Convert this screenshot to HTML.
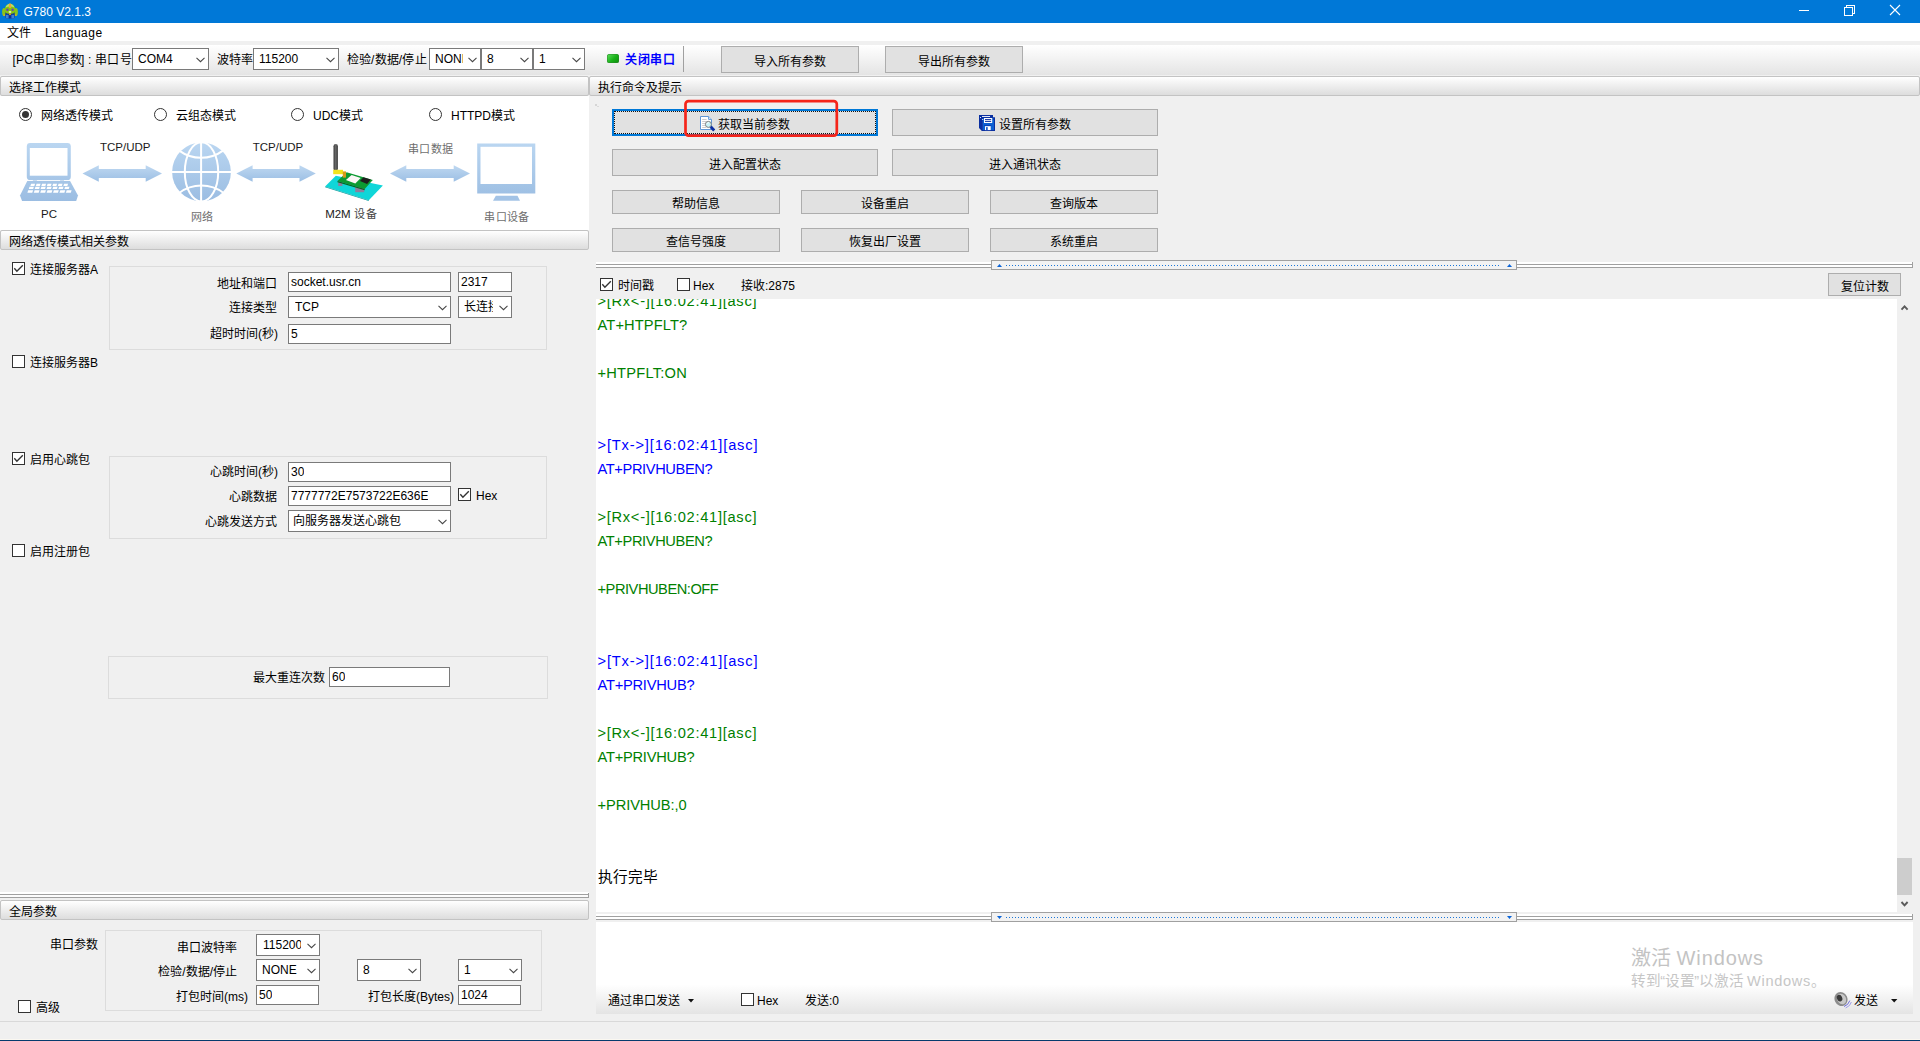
<!DOCTYPE html>
<html lang="zh-CN"><head><meta charset="utf-8"><title>G780 V2.1.3</title>
<style>
html,body{margin:0;padding:0}
body{width:1920px;height:1041px;overflow:hidden;background:#f0f0f0;position:relative;
 font-family:"Liberation Sans",sans-serif;font-size:12px;color:#000}
.a{position:absolute;box-sizing:content-box}
.t{position:absolute;white-space:nowrap;line-height:14px;font-size:12px}
.hdr{height:18px;border:1px solid #c3c3c3;border-radius:2px;
 background:linear-gradient(#ffffff,#f3f3f3 35%,#dddddd);}
.hdr>span{position:absolute;left:8px;top:4px;line-height:14px;white-space:nowrap}
.sel,.inp{background:#fff;border:1px solid #7a7a7a;overflow:hidden}
.sv{position:absolute;top:0;white-space:nowrap;overflow:hidden;display:block}
.inp .sv{top:0}
.chev{position:absolute;right:3.5px;top:50%;margin-top:-2px}
.cb{width:11px;height:11px;border:1px solid #333;background:#fff}
.rd{width:11px;height:11px;border:1px solid #333;border-radius:50%;background:#fff}
.rd i{position:absolute;left:2px;top:2px;width:7px;height:7px;border-radius:50%;background:#333}
.btn{background:#e1e1e1;border:1px solid #adadad;text-align:center;white-space:nowrap}
.btn>span{display:inline-block;vertical-align:top;position:relative}
.grp{border:1px solid #dcdcdc}
.log{position:absolute;white-space:pre;font-size:14.67px;line-height:24px}
.cj{display:inline-block;text-align:justify;text-align-last:justify;white-space:nowrap;vertical-align:baseline;
 text-shadow:1px 0 0 currentColor,0 -1px 0 currentColor,1px -1px 0 currentColor}
.cjkfont .cj{text-shadow:none}
.g{color:#008000}.b{color:#0000ff}
</style></head>
<body>
<div class="a " style="left:0px;top:0px;width:1920px;height:23px;background:#0078d7"></div>
<svg class="a" style="left:2px;top:3px" width="16" height="16" viewBox="0 0 16 16">
<ellipse cx="2" cy="9" rx="1.9" ry="4" fill="#8ac41c"/><ellipse cx="14" cy="9" rx="1.9" ry="4" fill="#8ac41c"/>
<circle cx="2.2" cy="12.2" r="0.9" fill="#d8b020"/><circle cx="13.8" cy="12.2" r="0.9" fill="#d8b020"/>
<path d="M3.4 9 H12.6 V14.6 Q12.6 15.4 11.8 15.4 H4.2 Q3.4 15.4 3.4 14.6Z" fill="#0c2f96"/>
<rect x="3.8" y="11.8" width="2.8" height="3.6" fill="#3f82d2"/><rect x="9.4" y="11.8" width="2.8" height="3.6" fill="#3f82d2"/>
<path d="M8 0.4 C12.8 1.2 14 6 13.2 8.8 C12.4 10.6 10.2 11 8 11 C5.8 11 3.6 10.6 2.8 8.8 C2 6 3.2 1.2 8 0.4Z" fill="#84c212"/>
<path d="M8 0.6 C10.8 1.4 12 3 12.4 4.6 C10 3.2 6 3.2 3.6 4.6 C4 3 5.2 1.4 8 0.6Z" fill="#b6df70"/>
<rect x="6.9" y="0.8" width="2.2" height="4.2" rx="0.9" fill="#f2a336"/>
<circle cx="5.4" cy="6.7" r="1.2" fill="#6b3db4"/><circle cx="10.6" cy="6.7" r="1.2" fill="#6b3db4"/>
<ellipse cx="8" cy="9" rx="1.4" ry="0.7" fill="#fff"/>
<rect x="7.1" y="10.4" width="1.8" height="1.7" fill="#e8a422"/>
</svg>
<div class="t" style="left:23.5px;top:1px;line-height:23px;color:#fff;font-size:12px;letter-spacing:0">G780 V2.1.3</div>
<svg class="a" style="left:1790px;top:0" width="130" height="23" viewBox="1790 0 130 23" shape-rendering="crispEdges">
<rect x="1799" y="10" width="10" height="1" fill="#fff"/>
<path d="M1846.5 7.5 V5.5 H1854.5 V13.5 H1852.5" fill="none" stroke="#fff" stroke-width="1"/>
<rect x="1844.5" y="7.5" width="8" height="8" fill="none" stroke="#fff" stroke-width="1"/>
</svg>
<svg class="a" style="left:1888px;top:3px" width="14" height="14" viewBox="0 0 14 14">
<path d="M2 2 L12 12 M12 2 L2 12" stroke="#fff" stroke-width="1.1" fill="none"/></svg>
<div class="a " style="left:0px;top:23px;width:1920px;height:18px;background:#fff"></div>
<div class="t " style="left:7px;top:26px;"><span class="cj" style="width:24px">文件</span></div>
<div class="t " style="left:45px;top:26px;letter-spacing:0.55px">Language</div>
<div class="a " style="left:0px;top:45px;width:1920px;height:30px;background:linear-gradient(#ffffff,#f3f3f3 45%,#e4e4e4)"></div>
<div class="t " style="left:12.4px;top:53px;letter-spacing:0.2px">[PC<span class="cj" style="width:48px">串口参数</span>] : <span class="cj" style="width:36px">串口号</span></div>
<div class="a sel" style="left:132px;top:48px;width:75px;height:20px"><span class="sv" style="left:5px;width:55px;line-height:20px">COM4</span><svg class="chev" width="9" height="6" viewBox="0 0 9 6"><path d="M0.5 0.9 L4.5 4.7 L8.5 0.9" fill="none" stroke="#454545" stroke-width="1.05"/></svg></div>
<div class="t " style="left:217px;top:53px;"><span class="cj" style="width:36px">波特率</span></div>
<div class="a sel" style="left:253px;top:48px;width:84px;height:20px"><span class="sv" style="left:5px;width:64px;line-height:20px">115200</span><svg class="chev" width="9" height="6" viewBox="0 0 9 6"><path d="M0.5 0.9 L4.5 4.7 L8.5 0.9" fill="none" stroke="#454545" stroke-width="1.05"/></svg></div>
<div class="t " style="left:347px;top:53px;letter-spacing:0.4px"><span class="cj" style="width:24px">检验</span>/<span class="cj" style="width:24px">数据</span>/<span class="cj" style="width:24px">停止</span></div>
<div class="a sel" style="left:429px;top:48px;width:50px;height:20px"><span class="sv" style="left:5px;width:28px;line-height:20px">NONE</span><svg class="chev" width="9" height="6" viewBox="0 0 9 6"><path d="M0.5 0.9 L4.5 4.7 L8.5 0.9" fill="none" stroke="#454545" stroke-width="1.05"/></svg></div>
<div class="a sel" style="left:481px;top:48px;width:50px;height:20px"><span class="sv" style="left:5px;width:30px;line-height:20px">8</span><svg class="chev" width="9" height="6" viewBox="0 0 9 6"><path d="M0.5 0.9 L4.5 4.7 L8.5 0.9" fill="none" stroke="#454545" stroke-width="1.05"/></svg></div>
<div class="a sel" style="left:533px;top:48px;width:50px;height:20px"><span class="sv" style="left:5px;width:30px;line-height:20px">1</span><svg class="chev" width="9" height="6" viewBox="0 0 9 6"><path d="M0.5 0.9 L4.5 4.7 L8.5 0.9" fill="none" stroke="#454545" stroke-width="1.05"/></svg></div>
<div class="a " style="left:607px;top:54px;width:12px;height:9px;border-radius:2.5px;background:linear-gradient(135deg,#5fe05f,#18b018 55%,#0c8c0c);box-shadow:0 0 0 0.5px #2a8a2a inset"></div>
<div class="t " style="left:625px;top:53px;color:#0000ff;font-weight:bold"><span class="cj" style="width:50px">关闭串口</span></div>
<div class="a " style="left:683px;top:46px;width:1px;height:26px;background:#a0a0a0"></div>
<div class="a btn " style="left:721px;top:46px;width:136px;height:25px;line-height:25px"><span style="top:3px"><span class="cj" style="width:72px">导入所有参数</span></span></div>
<div class="a btn " style="left:885px;top:46px;width:136px;height:25px;line-height:25px"><span style="top:3px"><span class="cj" style="width:72px">导出所有参数</span></span></div>
<div class="a hdr" style="left:0px;top:76px;width:587px"><span><span class="cj" style="width:72px">选择工作模式</span></span></div>
<div class="a " style="left:0px;top:96px;width:589px;height:134px;background:#fff"></div>
<div class="a rd" style="left:19px;top:108px"><i></i></div>
<div class="t " style="left:41px;top:109px;"><span class="cj" style="width:72px">网络透传模式</span></div>
<div class="a rd" style="left:154px;top:108px"></div>
<div class="t " style="left:176px;top:109px;"><span class="cj" style="width:60px">云组态模式</span></div>
<div class="a rd" style="left:291px;top:108px"></div>
<div class="t " style="left:313px;top:109px;">UDC<span class="cj" style="width:24px">模式</span></div>
<div class="a rd" style="left:429px;top:108px"></div>
<div class="t " style="left:451px;top:109px;">HTTPD<span class="cj" style="width:24px">模式</span></div>
<svg class="a" style="left:0;top:96px" width="589" height="134" viewBox="0 96 589 134">
<defs>
<linearGradient id="ga" x1="0" y1="0" x2="0" y2="1"><stop offset="0" stop-color="#bfd8f1"/><stop offset="1" stop-color="#9cbfe4"/></linearGradient>
<linearGradient id="gl" gradientUnits="userSpaceOnUse" x1="0" y1="143" x2="0" y2="201"><stop offset="0" stop-color="#bad6f1"/><stop offset="1" stop-color="#9bbde2"/></linearGradient>
<linearGradient id="gant" x1="0" y1="0" x2="1" y2="0"><stop offset="0" stop-color="#3a3a3a"/><stop offset="0.5" stop-color="#6a6a6a"/><stop offset="1" stop-color="#363636"/></linearGradient>
</defs>
<rect x="26.8" y="143" width="44" height="37.2" rx="3.4" fill="url(#gl)"/>
<rect x="29.8" y="148" width="37.7" height="27.7" fill="#fff"/>
<polygon points="27.5,180.6 69.8,180.6 78,195.5 76.2,200.9 22.1,200.9 20,195.5" fill="url(#gl)"/>
<rect x="26.8" y="180.1" width="6.1" height="0.9" fill="#fff"/><rect x="64" y="180.1" width="6.8" height="0.9" fill="#fff"/>
<rect x="36.9" y="180" width="23.2" height="0.8" fill="#fff"/>
<g stroke="#fff" transform="skewX(-18)">
<line x1="90.8" y1="184.9" x2="127.9" y2="184.9" stroke-width="2.3" stroke-dasharray="4 1.5"/>
<line x1="90.2" y1="187.95" x2="130.3" y2="187.95" stroke-width="2.3" stroke-dasharray="4.4 1.53"/>
<line x1="90" y1="191.45" x2="133.4" y2="191.45" stroke-width="2.6" stroke-dasharray="4.9 1.52"/>
</g>
<polygon fill="url(#ga)" points="82.5,173.5 98.8,165.3 98.8,169.1 145.7,169.1 145.7,165.3 162,173.5 145.7,181.7 145.7,177.9 98.8,177.9 98.8,181.7"/>
<circle cx="201.5" cy="171.9" r="29.4" fill="url(#gl)"/>
<g fill="none" stroke="#fff" stroke-width="2">
<line x1="171" y1="172" x2="232" y2="172"/><line x1="201.1" y1="142" x2="201.1" y2="202"/>
<ellipse cx="201.5" cy="171.9" rx="16.7" ry="29.6"/>
<path d="M179.2 150.6 A37 37 0 0 0 223 150.6"/><path d="M179.2 193 A37 37 0 0 1 223.6 193"/>
</g>
<polygon fill="url(#ga)" points="236.3,173.5 252.6,165.3 252.6,169.1 299.5,169.1 299.5,165.3 315.8,173.5 299.5,181.7 299.5,177.9 252.6,177.9 252.6,181.7"/>
<polygon points="325.1,186.4 335.8,175.7 382.9,185.4 368.8,200.2" fill="#0fd6d8"/>
<polygon points="325.1,186.4 368.8,200.2 368.8,201 325.1,187.2" fill="#0a9ea0"/>
<rect x="338.2" y="182.2" width="4.2" height="3.8" fill="#8c7f9e"/>
<rect x="355.2" y="187" width="9" height="5.2" fill="#8c7f9e"/>
<polygon points="337.5,181 346.6,172.3 372.8,180 364.7,189.1" fill="#0c9a32"/>
<polygon points="337.5,181 364.7,189.1 364.7,190.3 337.5,182.2" fill="#08661f"/>
<polygon points="345.9,180 351.6,175 360.7,178 355.3,183.4" fill="#fbf6f6"/>
<polygon points="360,181 363.4,177.3 370.8,179.4 367.1,184" fill="#1e1e1e"/>
<rect x="333.5" y="144" width="4.4" height="27" rx="2.2" fill="url(#gant)"/>
<rect x="333.2" y="169.8" width="9.8" height="4.4" fill="#f2e41c"/>
<rect x="342.8" y="171.4" width="3.2" height="6.2" fill="#d89a1c"/>
<polygon fill="url(#ga)" points="390,173.5 406.3,165.3 406.3,169.1 453.7,169.1 453.7,165.3 470,173.5 453.7,181.7 453.7,177.9 406.3,177.9 406.3,181.7"/>
<rect x="477.2" y="143.5" width="58.1" height="50" fill="url(#gl)"/>
<rect x="480.5" y="146.8" width="51.5" height="37.2" fill="#fff"/>
<polygon points="495.8,195.7 517.5,195.7 520,200.7 493,200.7" fill="#a3c3e6"/>
</svg>
<div class="t " style="left:-74.8px;width:400px;text-align:center;top:140px;font-size:11.5px;color:#1a1a1a">TCP/UDP</div>
<div class="t " style="left:78px;width:400px;text-align:center;top:140px;font-size:11.5px;color:#1a1a1a">TCP/UDP</div>
<div class="t " style="left:230.6px;width:400px;text-align:center;top:142px;font-size:11px;color:#6e6e6e"><span class="cj" style="width:45.2px">串口数据</span></div>
<div class="t " style="left:-151px;width:400px;text-align:center;top:207px;font-size:11.5px;color:#1a1a1a">PC</div>
<div class="t " style="left:1.5px;width:400px;text-align:center;top:210px;font-size:11px;color:#6e6e6e"><span class="cj" style="width:22px">网络</span></div>
<div class="t" style="left:151px;width:400px;text-align:center;top:207px;font-size:11.5px;color:#1a1a1a">M2M <span style="font-size:11px;color:#6e6e6e;color:#444"><span class="cj" style="width:23px">设备</span></span></div>
<div class="t " style="left:306.8px;width:400px;text-align:center;top:210px;font-size:11px;color:#6e6e6e"><span class="cj" style="width:45.2px">串口设备</span></div>
<div class="a hdr" style="left:0px;top:230px;width:587px"><span><span class="cj" style="width:120px">网络透传模式相关参数</span></span></div>
<div class="a cb" style="left:12px;top:262px"><svg width="11" height="11" viewBox="0 0 11 11" style="position:absolute;left:0;top:0"><path d="M1.3 5.3 L3.9 8.3 L9.8 2.2" fill="none" stroke="#333" stroke-width="1.35"/></svg></div>
<div class="t " style="left:30px;top:263px;"><span class="cj" style="width:60px">连接服务器</span>A</div>
<div class="a grp" style="left:109px;top:266px;width:436px;height:82px"></div>
<div class="t " style="left:-23px;width:300px;text-align:right;top:277px;"><span class="cj" style="width:60px">地址和端口</span></div>
<div class="a inp" style="left:288px;top:272px;width:161px;height:18px"><span class="sv" style="left:2px;line-height:19px">socket.usr.cn</span></div>
<div class="a inp" style="left:458px;top:272px;width:52px;height:18px"><span class="sv" style="left:2px;line-height:19px">2317</span></div>
<div class="t " style="left:-23px;width:300px;text-align:right;top:301px;"><span class="cj" style="width:48px">连接类型</span></div>
<div class="a sel" style="left:288px;top:296px;width:161px;height:20px"><span class="sv" style="left:6px;width:141px;line-height:20px">TCP</span><svg class="chev" width="9" height="6" viewBox="0 0 9 6"><path d="M0.5 0.9 L4.5 4.7 L8.5 0.9" fill="none" stroke="#454545" stroke-width="1.05"/></svg></div>
<div class="a sel" style="left:458px;top:296px;width:52px;height:20px"><span class="sv" style="left:5px;width:29px;line-height:20px"><span class="cj" style="width:36px">长连接</span></span><svg class="chev" width="9" height="6" viewBox="0 0 9 6"><path d="M0.5 0.9 L4.5 4.7 L8.5 0.9" fill="none" stroke="#454545" stroke-width="1.05"/></svg></div>
<div class="t " style="left:-22px;width:300px;text-align:right;top:327px;"><span class="cj" style="width:48px">超时时间</span>(<span class="cj" style="width:12px">秒</span>)</div>
<div class="a inp" style="left:288px;top:324px;width:161px;height:18px"><span class="sv" style="left:2px;line-height:19px">5</span></div>
<div class="a cb" style="left:12px;top:355px"></div>
<div class="t " style="left:30px;top:356px;"><span class="cj" style="width:60px">连接服务器</span>B</div>
<div class="a cb" style="left:12px;top:452px"><svg width="11" height="11" viewBox="0 0 11 11" style="position:absolute;left:0;top:0"><path d="M1.3 5.3 L3.9 8.3 L9.8 2.2" fill="none" stroke="#333" stroke-width="1.35"/></svg></div>
<div class="t " style="left:30px;top:453px;"><span class="cj" style="width:60px">启用心跳包</span></div>
<div class="a grp" style="left:109px;top:456px;width:436px;height:81px"></div>
<div class="t " style="left:-22px;width:300px;text-align:right;top:465px;"><span class="cj" style="width:48px">心跳时间</span>(<span class="cj" style="width:12px">秒</span>)</div>
<div class="a inp" style="left:288px;top:462px;width:161px;height:18px"><span class="sv" style="left:2px;line-height:19px">30</span></div>
<div class="t " style="left:-23px;width:300px;text-align:right;top:490px;"><span class="cj" style="width:48px">心跳数据</span></div>
<div class="a inp" style="left:288px;top:486px;width:161px;height:18px"><span class="sv" style="left:2px;line-height:19px">7777772E7573722E636E</span></div>
<div class="a cb" style="left:458px;top:488px"><svg width="11" height="11" viewBox="0 0 11 11" style="position:absolute;left:0;top:0"><path d="M1.3 5.3 L3.9 8.3 L9.8 2.2" fill="none" stroke="#333" stroke-width="1.35"/></svg></div>
<div class="t " style="left:476px;top:489px;">Hex</div>
<div class="t " style="left:-23px;width:300px;text-align:right;top:515px;"><span class="cj" style="width:72px">心跳发送方式</span></div>
<div class="a sel" style="left:288px;top:510px;width:161px;height:20px"><span class="sv" style="left:4px;width:141px;line-height:20px"><span class="cj" style="width:108px">向服务器发送心跳包</span></span><svg class="chev" width="9" height="6" viewBox="0 0 9 6"><path d="M0.5 0.9 L4.5 4.7 L8.5 0.9" fill="none" stroke="#454545" stroke-width="1.05"/></svg></div>
<div class="a cb" style="left:12px;top:544px"></div>
<div class="t " style="left:30px;top:545px;"><span class="cj" style="width:60px">启用注册包</span></div>
<div class="a grp" style="left:108px;top:656px;width:438px;height:41px"></div>
<div class="t " style="left:25px;width:300px;text-align:right;top:671px;"><span class="cj" style="width:72px">最大重连次数</span></div>
<div class="a inp" style="left:329px;top:667px;width:119px;height:18px"><span class="sv" style="left:2px;line-height:19px">60</span></div>
<div class="a " style="left:0px;top:892px;width:589px;height:2px;background:#fff"></div>
<div class="a " style="left:0px;top:894px;width:589px;height:1px;background:#a0a0a0"></div>
<div class="a " style="left:0px;top:895px;width:589px;height:2px;background:#fcfcfc"></div>
<div class="a " style="left:0px;top:897px;width:589px;height:1px;background:#a0a0a0"></div>
<div class="a " style="left:588px;top:893px;width:1px;height:5px;background:#a0a0a0"></div>
<div class="a hdr" style="left:0px;top:900px;width:587px"><span><span class="cj" style="width:48px">全局参数</span></span></div>
<div class="t " style="left:-202px;width:300px;text-align:right;top:938px;"><span class="cj" style="width:48px">串口参数</span></div>
<div class="a grp" style="left:105px;top:930px;width:435px;height:79px"></div>
<div class="t " style="left:-63px;width:300px;text-align:right;top:941px;"><span class="cj" style="width:60px">串口波特率</span></div>
<div class="a sel" style="left:256px;top:934px;width:62px;height:20px"><span class="sv" style="left:6px;width:38px;line-height:20px">115200</span><svg class="chev" width="9" height="6" viewBox="0 0 9 6"><path d="M0.5 0.9 L4.5 4.7 L8.5 0.9" fill="none" stroke="#454545" stroke-width="1.05"/></svg></div>
<div class="t " style="left:-63px;width:300px;text-align:right;top:965px;"><span class="cj" style="width:24px">检验</span>/<span class="cj" style="width:24px">数据</span>/<span class="cj" style="width:24px">停止</span></div>
<div class="a sel" style="left:256px;top:959px;width:62px;height:20px"><span class="sv" style="left:5px;width:42px;line-height:20px">NONE</span><svg class="chev" width="9" height="6" viewBox="0 0 9 6"><path d="M0.5 0.9 L4.5 4.7 L8.5 0.9" fill="none" stroke="#454545" stroke-width="1.05"/></svg></div>
<div class="a sel" style="left:357px;top:959px;width:62px;height:20px"><span class="sv" style="left:5px;width:42px;line-height:20px">8</span><svg class="chev" width="9" height="6" viewBox="0 0 9 6"><path d="M0.5 0.9 L4.5 4.7 L8.5 0.9" fill="none" stroke="#454545" stroke-width="1.05"/></svg></div>
<div class="a sel" style="left:458px;top:959px;width:62px;height:20px"><span class="sv" style="left:5px;width:42px;line-height:20px">1</span><svg class="chev" width="9" height="6" viewBox="0 0 9 6"><path d="M0.5 0.9 L4.5 4.7 L8.5 0.9" fill="none" stroke="#454545" stroke-width="1.05"/></svg></div>
<div class="t " style="left:-52px;width:300px;text-align:right;top:990px;"><span class="cj" style="width:48px">打包时间</span>(ms)</div>
<div class="a inp" style="left:256px;top:985px;width:61px;height:18px"><span class="sv" style="left:2px;line-height:19px">50</span></div>
<div class="t " style="left:154px;width:300px;text-align:right;top:990px;"><span class="cj" style="width:48px">打包长度</span>(Bytes)</div>
<div class="a inp" style="left:458px;top:985px;width:61px;height:18px"><span class="sv" style="left:2px;line-height:19px">1024</span></div>
<div class="a cb" style="left:18px;top:1000px"></div>
<div class="t " style="left:36px;top:1001px;"><span class="cj" style="width:24px">高级</span></div>
<div class="a hdr" style="left:589px;top:76px;width:1329px"><span><span class="cj" style="width:84px">执行命令及提示</span></span></div>
<div class="a " style="left:595px;top:104px;width:2px;height:2px;background:#cdcdcd;border-radius:1px"></div>
<div class="a " style="left:596.5px;top:105.5px;width:2px;height:1.5px;background:#d6d6d6;border-radius:1px"></div>
<div class="a" style="left:612px;top:109px;width:262px;height:23px;border:2px solid #0078d7;background:#e1e1e1"></div>
<div class="a" style="left:614px;top:111px;width:260px;height:21px;border:1px dotted #111"></div>
<div class="t" style="left:700px;top:116px;line-height:16px"><svg width="16" height="16" viewBox="0 0 16 16" style="display:inline-block;vertical-align:top;position:relative;top:0px;margin-right:2px">
<path d="M0.5 0.5 H8.6 L11.5 3.4 V13.5 H0.5 Z" fill="#ffffff" stroke="#5f97d6" stroke-width="1"/>
<path d="M8.6 0.5 V3.4 H11.5" fill="#eaf2fc" stroke="#5f97d6" stroke-width="1"/>
<path d="M2.2 3.5H6.6 M2.2 5.5H6.6 M2.2 7.5H5 M2.2 9.5H5 M2.2 11.5H6" stroke="#cdcdcd" stroke-width="1"/>
<circle cx="8.4" cy="8.4" r="3" fill="#c9f3f8" stroke="#7c7c7c" stroke-width="1"/>
<path d="M6.9 7.9 Q7.4 6.6 8.8 6.5" fill="none" stroke="#ffffff" stroke-width="0.9"/>
<path d="M10.7 10.7 L14.2 14.4" stroke="#0b2ea2" stroke-width="2.9" stroke-linecap="butt"/>
</svg><span style="position:relative;top:1px"><span class="cj" style="width:72px">获取当前参数</span></span></div>
<svg class="a" style="left:680px;top:96px" width="164" height="46" viewBox="680 96 164 46"><rect x="685.5" y="101.1" width="151.3" height="34.5" rx="3" fill="none" stroke="#f5251a" stroke-width="2.7"/></svg>
<div class="a btn " style="left:892px;top:109px;width:264px;height:25px;line-height:25px"><svg width="16" height="16" viewBox="0 0 16 16" style="display:inline-block;vertical-align:top;position:relative;top:5px;margin-right:4px">
<polygon points="0,0 14,0 14,3 3,3 3,16 0,13" fill="#0a2fa0"/>
<rect x="3" y="1.1" width="8" height="0.9" fill="#fff"/><rect x="1" y="2" width="1" height="1" fill="#dfe6f8"/>
<rect x="3.3" y="2.8" width="12.2" height="12.7" fill="#0b60d3" stroke="#0a2fa0" stroke-width="1"/>
<rect x="5" y="3" width="8.2" height="5" fill="#fff"/>
<path d="M6 4.6H12.2 M6 6.4H12.2" stroke="#0a2fa0" stroke-width="1"/>
<rect x="5.2" y="10" width="7" height="1" fill="#0a3fb4"/>
<rect x="6" y="11.2" width="5.7" height="3.9" fill="#fff"/>
<rect x="7.1" y="12.1" width="1.6" height="3" fill="#0b50c8"/>
<rect x="3.2" y="4" width="1" height="1" fill="#e8eefc"/><rect x="14" y="3.6" width="1" height="1" fill="#0a2fa0"/>
</svg><span style="top:3px"><span class="cj" style="width:72px">设置所有参数</span></span></div>
<div class="a btn " style="left:612px;top:149px;width:264px;height:25px;line-height:25px"><span style="top:3px"><span class="cj" style="width:72px">进入配置状态</span></span></div>
<div class="a btn " style="left:892px;top:149px;width:264px;height:25px;line-height:25px"><span style="top:3px"><span class="cj" style="width:72px">进入通讯状态</span></span></div>
<div class="a btn " style="left:612px;top:190px;width:166px;height:22px;line-height:22px"><span style="top:2px"><span class="cj" style="width:48px">帮助信息</span></span></div>
<div class="a btn " style="left:612px;top:228px;width:166px;height:22px;line-height:22px"><span style="top:2px"><span class="cj" style="width:60px">查信号强度</span></span></div>
<div class="a btn " style="left:801px;top:190px;width:166px;height:22px;line-height:22px"><span style="top:2px"><span class="cj" style="width:48px">设备重启</span></span></div>
<div class="a btn " style="left:801px;top:228px;width:166px;height:22px;line-height:22px"><span style="top:2px"><span class="cj" style="width:72px">恢复出厂设置</span></span></div>
<div class="a btn " style="left:990px;top:190px;width:166px;height:22px;line-height:22px"><span style="top:2px"><span class="cj" style="width:48px">查询版本</span></span></div>
<div class="a btn " style="left:990px;top:228px;width:166px;height:22px;line-height:22px"><span style="top:2px"><span class="cj" style="width:48px">系统重启</span></span></div>
<div class="a " style="left:596px;top:262px;width:1317px;height:2px;background:#fff"></div>
<div class="a " style="left:596px;top:264px;width:1317px;height:1px;background:#a0a0a0"></div>
<div class="a " style="left:596px;top:265px;width:1317px;height:2px;background:#fff"></div>
<div class="a " style="left:596px;top:267px;width:1317px;height:1px;background:#a0a0a0"></div>
<div class="a " style="left:1912px;top:262px;width:1px;height:6px;background:#a0a0a0"></div>
<div class="a " style="left:991px;top:260px;width:524px;height:8px;border:1px solid #a0a0a0;background:#f2f2f2"></div>
<svg class="a" style="left:991px;top:260px" width="526" height="10" viewBox="0 0 526 10"><path d="M0 3 L2.5 0 L5 3Z" transform="translate(6,4)" fill="#0a64d8"/><path d="M0 3 L2.5 0 L5 3Z" transform="translate(516,4)" fill="#0a64d8"/><line x1="15" y1="5.5" x2="509" y2="5.5" stroke="#1a76d8" stroke-width="1" stroke-dasharray="1 2" shape-rendering="crispEdges"/></svg>
<div class="a cb" style="left:600px;top:278px"><svg width="11" height="11" viewBox="0 0 11 11" style="position:absolute;left:0;top:0"><path d="M1.3 5.3 L3.9 8.3 L9.8 2.2" fill="none" stroke="#333" stroke-width="1.35"/></svg></div>
<div class="t " style="left:618px;top:279px;"><span class="cj" style="width:36px">时间戳</span></div>
<div class="a cb" style="left:677px;top:278px"></div>
<div class="t " style="left:693px;top:279px;">Hex</div>
<div class="t " style="left:741px;top:279px;"><span class="cj" style="width:24px">接收</span>:2875</div>
<div class="a btn " style="left:1828px;top:273px;width:71px;height:21px;line-height:21px"><span style="top:3px"><span class="cj" style="width:48px">复位计数</span></span></div>
<div class="a " style="left:596px;top:299px;width:1301px;height:613px;background:#fff;overflow:hidden"><div class="log" style="left:1.5px;top:-10px"><div class="g"><span style="letter-spacing:0.705px">&gt;[Rx&lt;-][16:02:41][asc]</span></div><div class="g"><span style="letter-spacing:0.118px">AT+HTPFLT?</span></div><div>&nbsp;</div><div class="g"><span style="letter-spacing:0.224px">+HTPFLT:ON</span></div><div>&nbsp;</div><div>&nbsp;</div><div class="b"><span style="letter-spacing:0.83px">&gt;[Tx-&gt;][16:02:41][asc]</span></div><div class="b"><span style="letter-spacing:-0.39px">AT+PRIVHUBEN?</span></div><div>&nbsp;</div><div class="g"><span style="letter-spacing:0.705px">&gt;[Rx&lt;-][16:02:41][asc]</span></div><div class="g"><span style="letter-spacing:-0.39px">AT+PRIVHUBEN?</span></div><div>&nbsp;</div><div class="g"><span style="letter-spacing:-0.473px">+PRIVHUBEN:OFF</span></div><div>&nbsp;</div><div>&nbsp;</div><div class="b"><span style="letter-spacing:0.83px">&gt;[Tx-&gt;][16:02:41][asc]</span></div><div class="b"><span style="letter-spacing:-0.242px">AT+PRIVHUB?</span></div><div>&nbsp;</div><div class="g"><span style="letter-spacing:0.705px">&gt;[Rx&lt;-][16:02:41][asc]</span></div><div class="g"><span style="letter-spacing:-0.242px">AT+PRIVHUB?</span></div><div>&nbsp;</div><div class="g"><span style="letter-spacing:-0.082px">+PRIVHUB:,0</span></div><div>&nbsp;</div><div>&nbsp;</div><div class="k"><span class="cj" style="width:58.68px">执行完毕</span></div></div></div>
<svg class="a" style="left:1897px;top:299px" width="17" height="613" viewBox="0 0 17 613">
<path d="M4.5 10.6 L7.55 7.3 L10.6 10.6" fill="none" stroke="#5a5a5a" stroke-width="1.9"/>
<rect x="0" y="559" width="15" height="37" fill="#cdcdcd"/>
<path d="M4.5 603 L7.55 606.3 L10.6 603" fill="none" stroke="#5a5a5a" stroke-width="1.9"/></svg>
<div class="a " style="left:596px;top:914px;width:1317px;height:2px;background:#fff"></div>
<div class="a " style="left:596px;top:916px;width:1317px;height:1px;background:#a0a0a0"></div>
<div class="a " style="left:596px;top:917px;width:1317px;height:2px;background:#fff"></div>
<div class="a " style="left:596px;top:919px;width:1317px;height:1px;background:#a0a0a0"></div>
<div class="a " style="left:1912px;top:914px;width:1px;height:6px;background:#a0a0a0"></div>
<div class="a " style="left:991px;top:912px;width:524px;height:8px;border:1px solid #a0a0a0;background:#f2f2f2"></div>
<svg class="a" style="left:991px;top:912px" width="526" height="10" viewBox="0 0 526 10"><path d="M0 0 L5 0 L2.5 3Z" transform="translate(6,4)" fill="#0a64d8"/><path d="M0 0 L5 0 L2.5 3Z" transform="translate(516,4)" fill="#0a64d8"/><line x1="15" y1="5.5" x2="509" y2="5.5" stroke="#1a76d8" stroke-width="1" stroke-dasharray="1 2" shape-rendering="crispEdges"/></svg>
<div class="a " style="left:596px;top:922px;width:1317px;height:92px;background:linear-gradient(#ffffff 0,#ffffff 68%,#e4e4e4 100%)"></div>
<div class="t " style="left:608px;top:994px;"><span class="cj" style="width:72px">通过串口发送</span></div>
<svg class="a" style="left:688px;top:999px" width="6" height="4"><path d="M0 0H6L3 3.5Z" fill="#111"/></svg>
<div class="a cb" style="left:741px;top:993px"></div>
<div class="t " style="left:757px;top:994px;">Hex</div>
<div class="t " style="left:805px;top:994px;"><span class="cj" style="width:24px">发送</span>:0</div>
<div class="t" style="left:1631px;top:944px;font-size:20px;line-height:28px;color:#c3c3c3"><span class="cj" style="width:40px">激活</span> <span style="letter-spacing:0.9px">Windows</span></div>
<div class="t" style="left:1631px;top:971px;font-size:14.6px;line-height:20px;color:#c6c6c6"><span class="cj" style="width:29.2px">转到</span>“<span class="cj" style="width:29.2px">设置</span>”<span class="cj" style="width:43.8px">以激活</span> <span style="letter-spacing:0.7px">Windows</span><span class="cj" style="width:14.6px">。</span></div>
<svg class="a" style="left:1833px;top:991px" width="19" height="18" viewBox="0 0 19 18">
<ellipse cx="8" cy="8" rx="6.4" ry="7.2" transform="rotate(-25 8 8)" fill="#8c8c8c"/>
<ellipse cx="8.6" cy="8" rx="4.4" ry="5.4" transform="rotate(-25 8.6 8)" fill="#c8c8c8"/>
<ellipse cx="6.6" cy="7.2" rx="2.6" ry="3.4" transform="rotate(-25 6.6 7.2)" fill="#3a3a3a"/>
<path d="M11 15.5 Q15.5 14 16.8 9.6" fill="none" stroke="#5a5ad8" stroke-width="0.9"/>
<path d="M12.6 17 Q17.4 15 18.4 11" fill="none" stroke="#8a8ae8" stroke-width="0.8"/></svg>
<div class="t " style="left:1854px;top:994px;"><span class="cj" style="width:24px">发送</span></div>
<svg class="a" style="left:1891px;top:999px" width="7" height="4"><path d="M0 0H6.4L3.2 3.6Z" fill="#111"/></svg>
<div class="a " style="left:0px;top:1021px;width:1920px;height:1px;background:#d9d9d9"></div>
<div class="a " style="left:0px;top:1039px;width:1920px;height:1px;background:#fbf8f1"></div>
<div class="a " style="left:0px;top:1040px;width:1920px;height:1px;background:#063b6e"></div>
<script>
/* when no CJK-capable font exists, ideographs render as thin .notdef boxes and are drawn heavier via CSS; switch that off if real glyphs are available */
(function(){var s=document.createElement('span');s.style.cssText='position:absolute;visibility:hidden;white-space:nowrap;font:100px "Liberation Sans",sans-serif';
s.textContent='\u7f51';document.body.appendChild(s);var w=s.getBoundingClientRect().width;document.body.removeChild(s);
if(w>90){document.documentElement.className+=' cjkfont';}})();
</script>
</body></html>
